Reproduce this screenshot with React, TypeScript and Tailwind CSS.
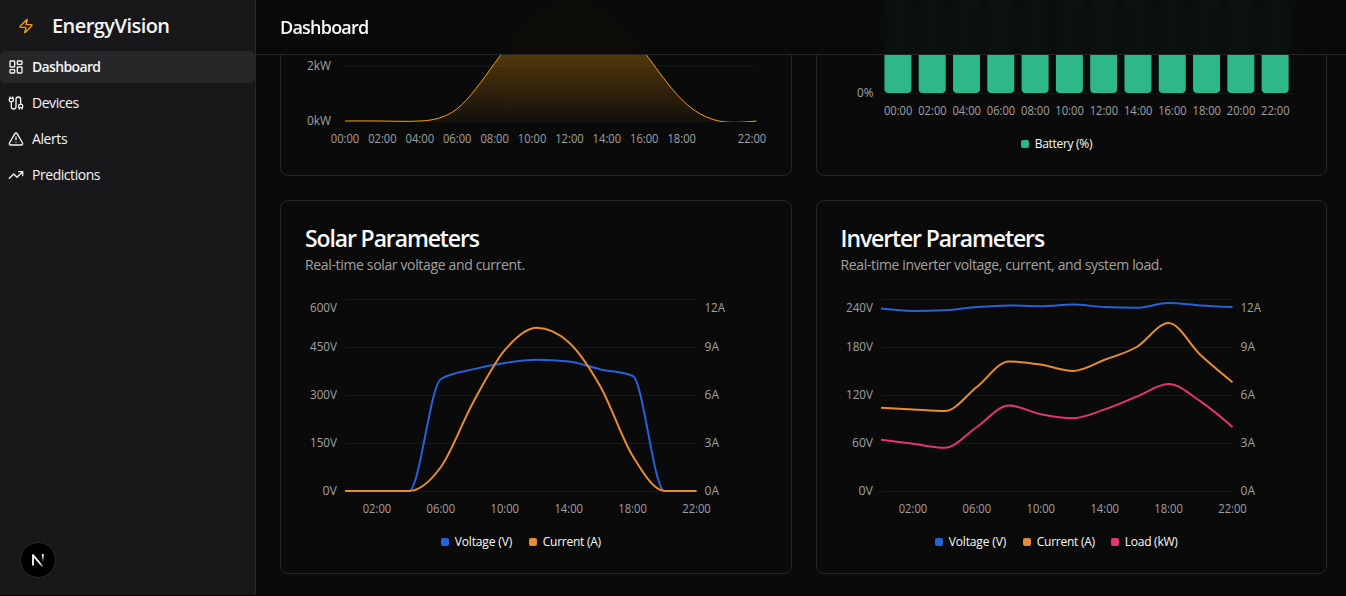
import React from "react";
import { Cable, LayoutDashboard, TrendingUp, TriangleAlert, Zap } from "lucide-react";

type Pt = [number, number];

const HOURS = ["00:00", "02:00", "04:00", "06:00", "08:00", "10:00", "12:00", "14:00", "16:00", "18:00", "20:00", "22:00"];

const BLUE = "#2662d9";
const GREEN = "#2eb88a";
const ORANGE = "#e88c30";
const PINK = "#e23670";
const AMBER = "#f59e0b";

/** Monotone cubic interpolation through the points. */
function monotone(p: Pt[]): string {
  const n = p.length;
  const slope = (i: number) => (p[i + 1][1] - p[i][1]) / (p[i + 1][0] - p[i][0]);
  const m: number[] = new Array(n).fill(0);
  for (let i = 1; i < n - 1; i++) {
    const a = slope(i - 1);
    const b = slope(i);
    m[i] = (Math.sign(a) + Math.sign(b)) * Math.min(Math.abs(a), Math.abs(b), 0.25 * Math.abs(a + b)) || 0;
  }
  m[0] = (3 * slope(0) - m[1]) / 2;
  m[n - 1] = (3 * slope(n - 2) - m[n - 2]) / 2;
  let d = `M${p[0][0]},${p[0][1]}`;
  for (let i = 0; i < n - 1; i++) {
    const dx = (p[i + 1][0] - p[i][0]) / 3;
    d += `C${p[i][0] + dx},${p[i][1] + dx * m[i]},${p[i + 1][0] - dx},${p[i + 1][1] - dx * m[i + 1]},${p[i + 1][0]},${p[i + 1][1]}`;
  }
  return d;
}

/** Control values of a natural cubic spline for one coordinate. */
function controls(x: number[]): [number[], number[]] {
  const n = x.length - 1;
  const a = new Array(n).fill(0);
  const b = new Array(n).fill(0);
  const r = new Array(n).fill(0);
  b[0] = 2;
  r[0] = x[0] + 2 * x[1];
  for (let i = 1; i < n - 1; i++) {
    a[i] = 1;
    b[i] = 4;
    r[i] = 4 * x[i] + 2 * x[i + 1];
  }
  a[n - 1] = 2;
  b[n - 1] = 7;
  r[n - 1] = 8 * x[n - 1] + x[n];
  for (let i = 1; i < n; i++) {
    const m = a[i] / b[i - 1];
    b[i] -= m;
    r[i] -= m * r[i - 1];
  }
  a[n - 1] = r[n - 1] / b[n - 1];
  for (let i = n - 2; i >= 0; i--) a[i] = (r[i] - a[i + 1]) / b[i];
  b[n - 1] = (x[n] + a[n - 1]) / 2;
  for (let i = 0; i < n - 1; i++) b[i] = 2 * x[i + 1] - a[i + 1];
  return [a, b];
}

function natural(p: Pt[]): string {
  const [x1, x2] = controls(p.map((q) => q[0]));
  const [y1, y2] = controls(p.map((q) => q[1]));
  let d = `M${p[0][0]},${p[0][1]}`;
  for (let i = 0; i < p.length - 1; i++) d += `C${x1[i]},${y1[i]},${x2[i]},${y2[i]},${p[i + 1][0]},${p[i + 1][1]}`;
  return d;
}

function Tick({ x, y, anchor = "middle", w, children }: { x: number; y: number; anchor?: "start" | "middle" | "end"; w: number; children: string }) {
  return (
    <text x={x} y={y} textAnchor={anchor} textLength={w} lengthAdjust="spacingAndGlyphs" className="fill-[#a1a1a1] text-xs">
      {children}
    </text>
  );
}

function Grid({ ys, to }: { ys: number[]; to: number }) {
  return (
    <g className="stroke-[#171717]">
      {ys.map((y) => (
        <line key={y} x1={40} x2={to} y1={y} y2={y} />
      ))}
    </g>
  );
}

function Legend({ items }: { items: { name: string; dot: string; box: string }[] }) {
  return (
    <div className="flex h-4 items-center justify-center gap-4 text-xs text-[#fafafa]">
      {items.map((it) => (
        <div key={it.name} className="flex items-center gap-1.5">
          <span className={`size-2 rounded-[2px] ${it.dot}`} />
          <span className={`whitespace-nowrap ${it.box}`}>{it.name}</span>
        </div>
      ))}
    </div>
  );
}

const V = { name: "Voltage (V)", dot: "bg-[#2662d9]", box: "w-[58px] tracking-[-0.15px]" };
const A = { name: "Current (A)", dot: "bg-[#e88c30]", box: "w-[58px] tracking-[-0.25px]" };
const L = { name: "Load (kW)", dot: "bg-[#e23670]", box: "w-[54px] tracking-[-0.25px]" };

const STEP = 351.5 / 11;
const LEFT_W: Record<string, number> = { 4: 27, 3: 21, 2: 14.5 };

function LineChart({ left, series }: { left: string[]; series: { color: string; max: number; data: number[] }[] }) {
  const ys = [201.5, 153.5, 105.5, 57.5, 9.5];
  const right = ["0A", "3A", "6A", "9A", "12A"];
  return (
    <svg width="462" height="238" className="block overflow-visible">
      <Grid ys={ys} to={391.5} />
      {series.map((s) => (
        <path key={s.color} d={monotone(s.data.map((v, i) => [40 + i * STEP, 201 - (v / s.max) * 192] as Pt))} fill="none" stroke={s.color} strokeWidth={2} />
      ))}
      {ys.map((y, i) => {
        const ty = i === 4 ? 22 : y + 3.5;
        return (
          <g key={y}>
            <Tick x={32} y={ty} anchor="end" w={LEFT_W[left[i].length]}>{left[i]}</Tick>
            <Tick x={399.5} y={ty} anchor="start" w={right[i].length === 3 ? 20.5 : 14.5}>{right[i]}</Tick>
          </g>
        );
      })}
      {[1, 3, 5, 7, 9, 11].map((i) => (
        <Tick key={i} x={40 + i * STEP} y={223} w={28.5}>{HOURS[i]}</Tick>
      ))}
    </svg>
  );
}

const GENERATION = [0, 0, 0, 0.45, 2.1, 3.7, 4.25, 3.9, 2.5, 0.78, 0, 0];
const gx = 411.5 / 11;
const curve = natural(GENERATION.map((v, i) => [40 + i * gx, 121 - v * 27.5] as Pt));

function GenerationChart() {
  return (
    <svg width="462" height="151" className="block overflow-visible">
      <defs>
        <linearGradient id="gen" x1="0" y1="0" x2="0" y2="1">
          <stop offset="5%" stopColor={AMBER} stopOpacity="0.8" />
          <stop offset="95%" stopColor={AMBER} stopOpacity="0.1" />
        </linearGradient>
        <clipPath id="plot">
          <rect x="40" y="-100" width="411.5" height="222" />
        </clipPath>
      </defs>
      <Grid ys={[11.5, 66, 121.5]} to={451.5} />
      <g clipPath="url(#plot)">
        <path d={`${curve}L451.5,121L40,121Z`} fill="url(#gen)" fillOpacity="0.6" />
        <path d={curve} fill="none" stroke={AMBER} />
      </g>
      <Tick x={26} y={70} anchor="end" w={24}>2kW</Tick>
      <Tick x={26} y={125} anchor="end" w={24}>0kW</Tick>
      {HOURS.map((h, i) =>
        i === 10 ? null : <Tick key={h} x={i === 11 ? 447 : 40 + i * gx} y={143} w={28.5}>{h}</Tick>,
      )}
    </svg>
  );
}

function BatteryChart() {
  const band = 411.5 / 12;
  return (
    <svg width="462" height="127" className="block overflow-visible">
      <Grid ys={[43.5, 93.5]} to={451.5} />
      {HOURS.map((h, i) => (
        <g key={h}>
          <rect x={40 + band * i + band * 0.1} y={-60} width={27} height={153} rx={4} fill={GREEN} />
          <Tick x={40 + band * (i + 0.5)} y={115} w={28.5}>{h}</Tick>
        </g>
      ))}
      <Tick x={32.5} y={97} anchor="end" w={16.5}>0%</Tick>
    </svg>
  );
}

function Card({ children, className = "" }: { children: React.ReactNode; className?: string }) {
  return <section className={`flex h-[374px] min-w-0 flex-col rounded-lg border border-[#262626] bg-[#0a0a0a] px-6 ${className}`}>{children}</section>;
}

function CardTitle({ title, text }: { title: string; text: string }) {
  return (
    <div className="h-[65px] whitespace-nowrap">
      <h3 className="text-[23px] leading-[27px] font-semibold tracking-[-1.12px] text-[#fafafa]">{title}</h3>
      <p className="mt-[3px] text-sm leading-5 tracking-[-0.35px] text-[#a1a1a1]">{text}</p>
    </div>
  );
}

const NAV = [
  { name: "Dashboard", Icon: LayoutDashboard, cls: "bg-[#27272a] font-semibold tracking-[-0.65px]" },
  { name: "Devices", Icon: Cable, cls: "tracking-[-0.45px]" },
  { name: "Alerts", Icon: TriangleAlert, cls: "tracking-[-0.4px]" },
  { name: "Predictions", Icon: TrendingUp, cls: "tracking-[-0.45px]" },
];

function Sidebar() {
  return (
    <aside className="relative h-[595px] w-64 shrink-0 border-r border-[#27272a] bg-[#18181b] text-[#f4f4f5]">
      <div className="flex h-[51px] items-center pl-[18px]">
        <Zap className="size-4 text-[#f59e0b]" />
        <span className="ml-[18px] pt-px text-xl font-semibold tracking-[-0.55px]">EnergyVision</span>
      </div>
      <nav className="flex flex-col gap-1">
        {NAV.map(({ name, Icon, cls }) => (
          <a key={name} className={`flex h-8 items-center gap-2 rounded-md px-2 text-sm ${cls}`}>
            <Icon className="size-4" />
            <span>{name}</span>
          </a>
        ))}
      </nav>
      <div className="absolute bottom-[17px] left-5 flex size-9 items-center justify-center rounded-full border border-[#2c2c2e] bg-black">
        <svg width="14" height="16" viewBox="0 0 14 16" fill="none">
          <defs>
            <linearGradient id="diag" x1="7" y1="8" x2="12" y2="15" gradientUnits="userSpaceOnUse">
              <stop offset="0.4" stopColor="#fff" />
              <stop offset="1" stopColor="#fff" stopOpacity="0.2" />
            </linearGradient>
            <linearGradient id="stem" x1="0" y1="2" x2="0" y2="10" gradientUnits="userSpaceOnUse">
              <stop offset="0.2" stopColor="#fff" />
              <stop offset="1" stopColor="#fff" stopOpacity="0" />
            </linearGradient>
          </defs>
          <path d="M2 13.5V2.5" stroke="#fff" strokeWidth="1.8" />
          <path d="M1.8 2.8L12 15" stroke="url(#diag)" strokeWidth="1.8" />
          <path d="M11.8 2v8" stroke="url(#stem)" strokeWidth="1.7" />
        </svg>
      </div>
    </aside>
  );
}

export default function App() {
  return (
    <div className="flex h-[596px] w-full overflow-hidden bg-[#050505] font-['Open_Sans','Noto_Sans',sans-serif]">
      <Sidebar />
      <main className="h-[595px] min-w-0 flex-1 overflow-hidden bg-[#0a0a0a]">
        <header className="relative z-10 flex h-[55px] items-center border-b border-[#262626] bg-[#0a0a0a]/95 px-6 backdrop-blur">
          <h1 className="text-lg font-semibold tracking-[-0.78px] text-[#fafafa]">Dashboard</h1>
        </header>
        <div className="-mt-[253px] grid grid-cols-2 gap-6 pr-[19px] pl-6">
          <Card className="justify-end pb-6">
            <GenerationChart />
          </Card>
          <Card className="justify-end pb-[23px]">
            <BatteryChart />
            <div className="pt-[9px] pr-[29px]">
              <Legend items={[{ name: "Battery (%)", dot: "bg-[#2eb88a]", box: "w-[58px] tracking-[-0.3px]" }]} />
            </div>
          </Card>
          <Card className="pt-6">
            <CardTitle title="Solar Parameters" text="Real-time solar voltage and current." />
            <LineChart
              left={["0V", "150V", "300V", "450V", "600V"]}
              series={[
                { color: BLUE, max: 600, data: [0, 0, 0, 350, 380, 400, 410, 405, 380, 360, 0, 0] },
                { color: ORANGE, max: 12, data: [0, 0, 0, 1.5, 5.5, 8.8, 10.2, 9.3, 6.5, 2.2, 0, 0] },
              ]}
            />
            <div className="pt-1.5 pr-[30px]">
              <Legend items={[V, A]} />
            </div>
          </Card>
          <Card className="pt-6">
            <CardTitle title="Inverter Parameters" text="Real-time inverter voltage, current, and system load." />
            <LineChart
              left={["0V", "60V", "120V", "180V", "240V"]}
              series={[
                { color: BLUE, max: 240, data: [228, 225, 226, 230, 232, 231, 233, 230, 229, 235, 232, 230] },
                { color: ORANGE, max: 12, data: [5.2, 5.1, 5.0, 6.5, 8.1, 7.9, 7.5, 8.2, 9.0, 10.5, 8.5, 6.8] },
                { color: PINK, max: 12, data: [3.2, 2.95, 2.7, 4.0, 5.35, 4.8, 4.55, 5.1, 5.9, 6.68, 5.6, 4.0] },
              ]}
            />
            <div className="pt-1.5 pr-[29px]">
              <Legend items={[V, A, L]} />
            </div>
          </Card>
        </div>
      </main>
    </div>
  );
}
